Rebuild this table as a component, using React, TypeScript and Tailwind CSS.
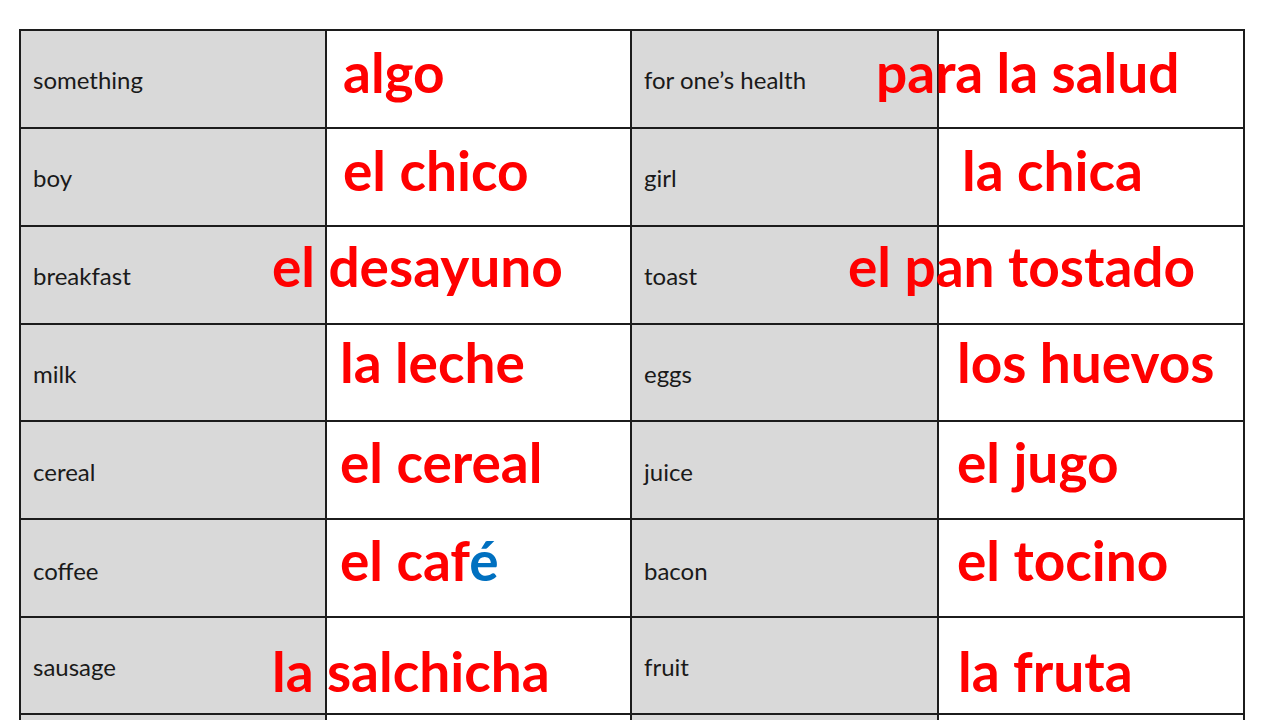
const rows = [
  { h: 'h-[96px]', enTop: 'pt-[37px]', esTop: 'pt-[11px]', left: ['something', 'algo', 'ml-[16px]'], right: ['for one’s health', 'para la salud', 'ml-[-63px]'] },
  { h: 'h-[96px]', enTop: 'pt-[37px]', esTop: 'pt-[11px]', left: ['boy', 'el chico', 'ml-[16px]'], right: ['girl', 'la chica', 'ml-[23px]'] },
  { h: 'h-[96px]', enTop: 'pt-[37px]', esTop: 'pt-[9px]', left: ['breakfast', 'el desayuno', 'ml-[-55px]'], right: ['toast', 'el pan tostado', 'ml-[-91px]'] },
  { h: 'h-[95px]', enTop: 'pt-[37px]', esTop: 'pt-[7px]', left: ['milk', 'la leche', 'ml-[13px]'], right: ['eggs', 'los huevos', 'ml-[18px]'] },
  { h: 'h-[96px]', enTop: 'pt-[38px]', esTop: 'pt-[10px]', left: ['cereal', 'el cereal', 'ml-[13px]'], right: ['juice', 'el jugo', 'ml-[18px]'] },
  { h: 'h-[96px]', enTop: 'pt-[39px]', esTop: 'pt-[10px]', left: ['coffee', 'el caf', 'ml-[13px]'], right: ['bacon', 'el tocino', 'ml-[18px]'] },
  { h: 'h-[95px]', enTop: 'pt-[37px]', esTop: 'pt-[23px]', left: ['sausage', 'la salchicha', 'ml-[-55px]'], right: ['fruit', 'la fruta', 'ml-[19px]'] },
];

function English({ text, h, top }: { text: string; h: string; top: string }) {
  return (
    <div className={`${h} ${top} bg-[#d9d9d9] pl-[12px] text-[24px] leading-[24px] text-[#1a1a1a] whitespace-nowrap`}>
      {text}
    </div>
  );
}

function Spanish({ text, h, top, shift, accent }: { text: string; h: string; top: string; shift: string; accent?: boolean }) {
  return (
    <div className={`${h} ${top} bg-white`}>
      <div className={`${shift} text-[55px] leading-[60px] font-bold text-[#ff0000] whitespace-nowrap`}>
        {text}
        {accent && <span className="text-[#0070c0]">é</span>}
      </div>
    </div>
  );
}

export default function App() {
  return (
    <div className="h-[720px] w-[1280px] overflow-hidden bg-white pl-[19px] pt-[29px]" style={{ fontFamily: 'Lato, "Open Sans", sans-serif' }}>
      <div className="grid w-[1226px] grid-cols-[304px_303px_305px_304px] gap-[2px] bg-[#1c1c1c] p-[2px]">
        {rows.map((r, i) => (
          <div key={i} className="contents">
            <English text={r.left[0]} h={r.h} top={r.enTop} />
            <Spanish text={r.left[1]} h={r.h} top={r.esTop} shift={r.left[2]} accent={i === 5} />
            <English text={r.right[0]} h={r.h} top={r.enTop} />
            <Spanish text={r.right[1]} h={r.h} top={r.esTop} shift={r.right[2]} />
          </div>
        ))}
        <div className="h-[40px] bg-[#d9d9d9]" />
        <div className="h-[40px] bg-white" />
        <div className="h-[40px] bg-[#d9d9d9]" />
        <div className="h-[40px] bg-white" />
      </div>
    </div>
  );
}
